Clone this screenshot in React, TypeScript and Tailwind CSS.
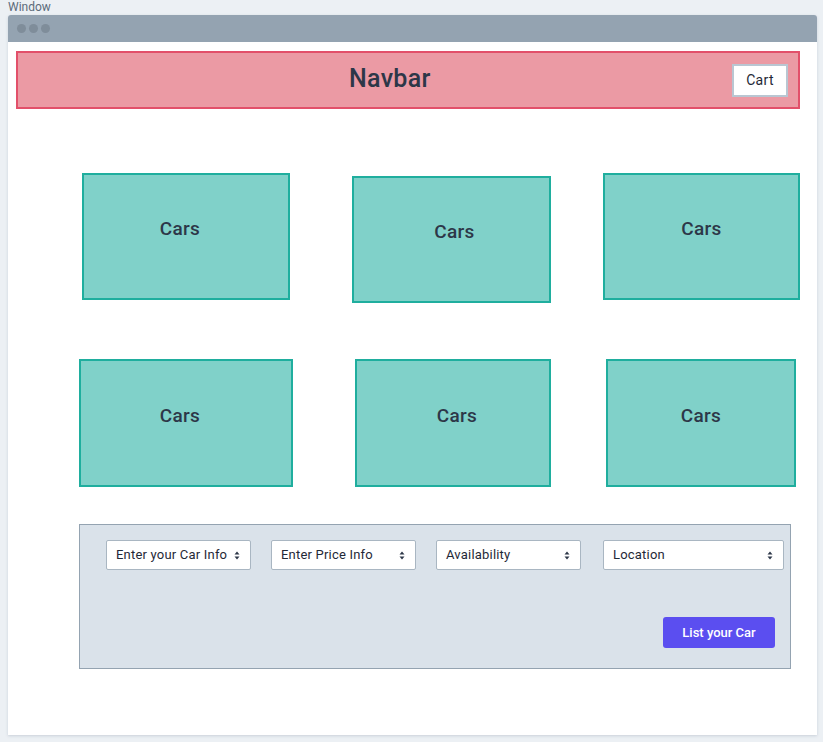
function Card({ w, h, label, className = '', shift = '' }: { w: string; h: string; label: string; className?: string; shift?: string }) {
  return (
    <div
      className={`${w} ${h} ${className} ${shift} shrink-0 bg-[#80d1c9] border-2 border-[#1fae9e] flex items-center justify-center pb-[14px]`}
    >
      <span className="text-[19px] font-medium text-[#2d3748] tracking-[0.3px]">{label}</span>
    </div>
  )
}

function UpDown() {
  return (
    <svg width="6" height="9" viewBox="0 0 6 9" className="shrink-0">
      <path d="M3 0.5 L5.5 3.5 H0.5 Z" fill="#2d3748" />
      <path d="M3 8.5 L5.5 5.5 H0.5 Z" fill="#2d3748" />
    </svg>
  )
}

function Select({ w, label }: { w: string; label: string }) {
  return (
    <div
      className={`${w} h-[30px] shrink-0 bg-white border border-[#a9b6c2] rounded-[2px] flex items-center justify-between pl-[9px] pr-[10px]`}
    >
      <span className="text-[13px] text-[#1f2937] tracking-[0.2px]">{label}</span>
      <UpDown />
    </div>
  )
}

export default function App() {
  return (
    <div
      className="w-[823px] h-[742px] bg-[#ecf0f4] overflow-hidden"
      style={{ fontFamily: 'Roboto, "Noto Sans", sans-serif' }}
    >
      <div className="h-[15px] pl-[8px] text-[12px] leading-[15px] text-[#5c6b7a]">Window</div>

      {/* Window */}
      <div className="ml-[8px] w-[809px] rounded-t-[3px] overflow-hidden shadow-[0_1px_3px_rgba(100,116,139,0.25)]">
        <div className="h-[27px] bg-[#94a3b1] flex items-center gap-[3px] pl-[9px]">
          <div className="w-[9px] h-[9px] rounded-full bg-[#7f8d9a]" />
          <div className="w-[9px] h-[9px] rounded-full bg-[#7f8d9a]" />
          <div className="w-[9px] h-[9px] rounded-full bg-[#7f8d9a]" />
        </div>

        <div className="h-[693px] bg-white pt-[9px] pl-[8px]">
          {/* Navbar */}
          <div className="w-[784px] h-[58px] bg-[#eb9aa4] border-2 border-[#e2506a] flex items-center">
            <span className="ml-[331px] mb-[3px] text-[25px] font-medium text-[#2d3748] tracking-[0.3px]">Navbar</span>
            <button className="ml-auto mr-[10px] w-[56px] h-[33px] bg-white border-2 border-[#b9c6d2] text-[14px] text-[#1f2937] tracking-[0.3px]">
              Cart
            </button>
          </div>

          {/* Cars row 1 */}
          <div className="flex items-start mt-[64px]">
            <Card w="w-[208px]" h="h-[127px]" label="Cars" className="ml-[66px]" shift="pr-[12px]" />
            <Card w="w-[199px]" h="h-[127px]" label="Cars" className="ml-[62px] mt-[3px]" shift="pl-[6px]" />
            <Card w="w-[197px]" h="h-[127px]" label="Cars" className="ml-[52px]" />
          </div>

          {/* Cars row 2 */}
          <div className="flex items-start mt-[56px]">
            <Card w="w-[214px]" h="h-[128px]" label="Cars" className="ml-[63px]" shift="pr-[12px]" />
            <Card w="w-[196px]" h="h-[128px]" label="Cars" className="ml-[62px]" shift="pl-[8px]" />
            <Card w="w-[190px]" h="h-[128px]" label="Cars" className="ml-[55px]" />
          </div>

          {/* Listing form */}
          <div className="ml-[63px] mt-[37px] w-[712px] h-[145px] bg-[#dae2ea] border border-[#94a3b1] flex flex-col">
            <div className="flex items-start pt-[15px] pl-[26px]">
              <Select w="w-[145px]" label="Enter your Car Info" />
              <div className="ml-[20px]">
                <Select w="w-[145px]" label="Enter Price Info" />
              </div>
              <div className="ml-[20px]">
                <Select w="w-[145px]" label="Availability" />
              </div>
              <div className="ml-[22px]">
                <Select w="w-[181px]" label="Location" />
              </div>
            </div>
            <div className="flex justify-end pr-[15px] mt-[47px]">
              <button className="w-[112px] h-[31px] rounded-[3px] bg-[#5b4ef0] text-white text-[13px] font-medium">
                List your Car
              </button>
            </div>
          </div>
        </div>
      </div>
    </div>
  )
}
